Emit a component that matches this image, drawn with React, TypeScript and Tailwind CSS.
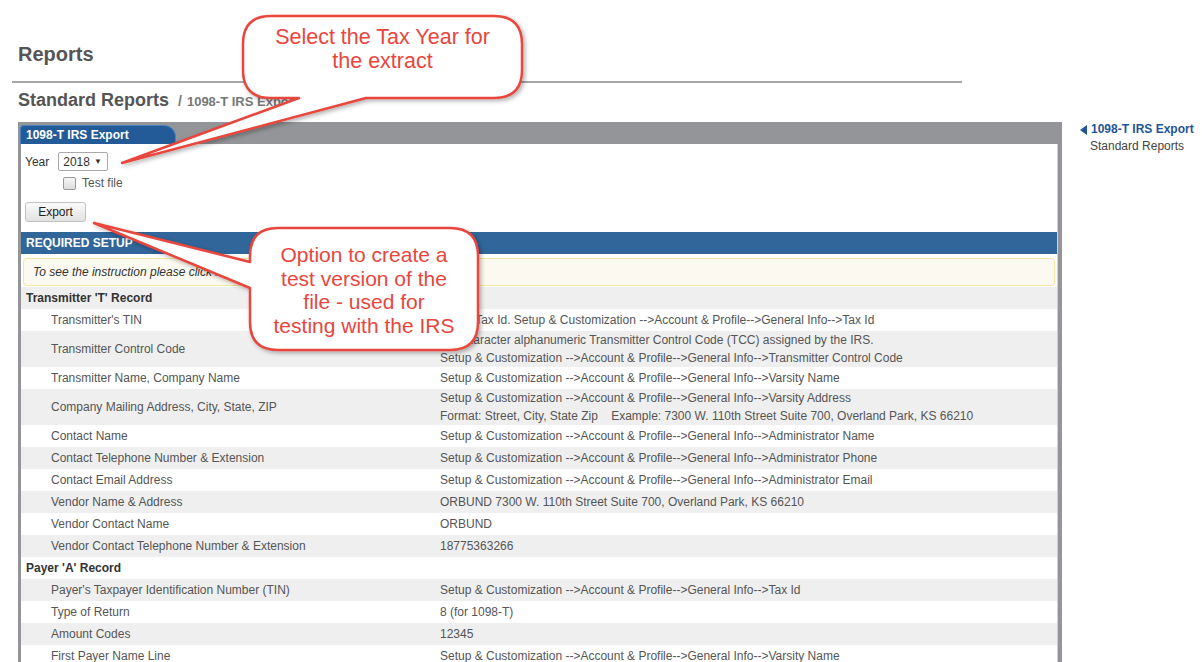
import React from 'react';

type Row =
  | { kind: 'section'; title: string }
  | { kind: 'item'; label: string; value: string[] };

const rows: Row[] = [
  { kind: 'section', title: "Transmitter 'T' Record" },
  { kind: 'item', label: "Transmitter's TIN", value: ['9 digit Tax Id. Setup & Customization -->Account & Profile-->General Info-->Tax Id'] },
  {
    kind: 'item',
    label: 'Transmitter Control Code',
    value: [
      'A 5 character alphanumeric Transmitter Control Code (TCC) assigned by the IRS.',
      'Setup & Customization -->Account & Profile-->General Info-->Transmitter Control Code',
    ],
  },
  { kind: 'item', label: 'Transmitter Name, Company Name', value: ['Setup & Customization -->Account & Profile-->General Info-->Varsity Name'] },
  {
    kind: 'item',
    label: 'Company Mailing Address, City, State, ZIP',
    value: [
      'Setup & Customization -->Account & Profile-->General Info-->Varsity Address',
      'Format: Street, City, State Zip\u00a0\u00a0\u00a0\u00a0Example: 7300 W. 110th Street Suite 700, Overland Park, KS 66210',
    ],
  },
  { kind: 'item', label: 'Contact Name', value: ['Setup & Customization -->Account & Profile-->General Info-->Administrator Name'] },
  { kind: 'item', label: 'Contact Telephone Number & Extension', value: ['Setup & Customization -->Account & Profile-->General Info-->Administrator Phone'] },
  { kind: 'item', label: 'Contact Email Address', value: ['Setup & Customization -->Account & Profile-->General Info-->Administrator Email'] },
  { kind: 'item', label: 'Vendor Name & Address', value: ['ORBUND 7300 W. 110th Street Suite 700, Overland Park, KS 66210'] },
  { kind: 'item', label: 'Vendor Contact Name', value: ['ORBUND'] },
  { kind: 'item', label: 'Vendor Contact Telephone Number & Extension', value: ['18775363266'] },
  { kind: 'section', title: "Payer 'A' Record" },
  { kind: 'item', label: "Payer's Taxpayer Identification Number (TIN)", value: ['Setup & Customization -->Account & Profile-->General Info-->Tax Id'] },
  { kind: 'item', label: 'Type of Return', value: ['8 (for 1098-T)'] },
  { kind: 'item', label: 'Amount Codes', value: ['12345'] },
  { kind: 'item', label: 'First Payer Name Line', value: ['Setup & Customization -->Account & Profile-->General Info-->Varsity Name'] },
];

const Callouts: React.FC = () => (
  <div className="absolute inset-0 pointer-events-none">
    <svg width="1202" height="662" className="absolute left-0 top-0">
      <defs>
        <filter id="shadow" x="-20%" y="-20%" width="140%" height="140%">
          <feDropShadow dx="2" dy="2" stdDeviation="2" floodColor="#000" floodOpacity="0.3" />
        </filter>
      </defs>
      <path
        d="M 271 16 H 494 Q 522 16 522 44 V 70 Q 522 98 494 98 H 366 L 122 163 L 299 98 H 271 Q 243 98 243 70 V 44 Q 243 16 271 16 Z"
        fill="#fff"
        stroke="#e8463d"
        strokeWidth="2.5"
        strokeLinejoin="round"
        filter="url(#shadow)"
      />
      <path
        d="M 278 228 H 450 Q 478 228 478 256 V 322 Q 478 350 450 350 H 278 Q 250 350 250 322 V 288 L 94 223 L 250 262 V 256 Q 250 228 278 228 Z"
        fill="#fff"
        stroke="#e8463d"
        strokeWidth="2.5"
        strokeLinejoin="round"
        filter="url(#shadow)"
      />
    </svg>
    <div className="absolute left-[243px] top-[25px] w-[279px] text-center text-[21.5px] leading-[24px] text-[#e8463d] font-['Liberation_Sans',Arial,sans-serif]">
      Select the Tax Year for
      <br />
      the extract
    </div>
    <div className="absolute left-[250px] top-[243px] w-[228px] text-center text-[21px] leading-[23.5px] text-[#e8463d] font-['Liberation_Sans',Arial,sans-serif]">
      Option to create a
      <br />
      test version of the
      <br />
      file - used for
      <br />
      testing with the IRS
    </div>
  </div>
);

const App: React.FC = () => {
  return (
    <div className="relative w-[1202px] h-[662px] overflow-hidden bg-white font-['Liberation_Sans',Arial,sans-serif] text-[12px] text-[#444]">
      <div className="flex">
        <div className="w-[1062px] shrink-0">
          <header className="ml-[12px] w-[950px] pt-[42px]">
            <h1 className="pl-[6px] text-[20px] leading-[24px] font-bold text-[#555]">Reports</h1>
            <div className="mt-[15px] h-[2px] bg-[#a6a6a6]" />
            <div className="mt-[6px] mb-[9px] pl-[6px] flex items-baseline leading-[22px]">
              <span className="text-[18px] font-bold text-[#555]">Standard Reports</span>
              <span className="ml-[9px] text-[14px] font-bold text-[#777]">/</span>
              <span className="ml-[5px] text-[13px] font-bold text-[#777]">1098-T IRS Export</span>
            </div>
          </header>

          <div className="ml-[18px] w-[1044px] h-[545px] bg-[#939598] pl-[3px] pr-[4px] pt-[3px]">
            <div className="h-[19px] flex">
              <div className="ml-[-1px] w-[156px] h-[19px] bg-[#235b99] border-t border-l border-r border-[#4a80bf] rounded-tl-[4px] rounded-tr-[12px] pl-[5px] text-[12px] leading-[18px] font-bold text-white">
                1098-T IRS Export
              </div>
            </div>
            <div className="bg-white h-full border-r border-[#d0d0d0]">
              <div className="px-[4px] pt-[8px] pb-[10px]">
                <div className="flex items-center h-[19px]">
                  <span className="text-[12px] text-[#333]">Year</span>
                  <div className="ml-[9px] w-[50px] h-[19px] border border-[#a9a9a9] rounded-[2px] flex items-center pl-[4px] text-[12px] text-[#333]">
                    2018
                    <span className="ml-[4px] text-[8px] leading-none">▼</span>
                  </div>
                </div>
                <div className="mt-[5px] flex items-center h-[14px] pl-[38px]">
                  <span className="w-[13px] h-[13px] rounded-[2px] border border-[#9a9a9a] bg-gradient-to-b from-[#f6f6f6] to-[#dedede]" />
                  <span className="ml-[6px] text-[12px] text-[#555]">Test file</span>
                </div>
                <button className="mt-[12px] w-[61px] h-[20px] border border-[#c2c2c2] rounded-[3px] bg-gradient-to-b from-[#fafafa] to-[#e2e2e2] text-[12px] text-[#222] leading-[18px]">
                  Export
                </button>
              </div>

              <div className="h-[22px] bg-[#30669a] pl-[5px] text-[12px] leading-[22px] font-bold text-white">REQUIRED SETUP</div>
              <div className="mx-[2px] mt-[4px] mb-[1px] h-[28px] border border-[#f5e79e] rounded-[4px] bg-[#fcfaf0] pl-[9px] text-[12px] leading-[26px] italic text-[#333]">
                To see the instruction please click here
              </div>

              <div>
                {rows.map((row, i) => {
                  const stripe = i % 2 === 0 ? 'bg-[#efefef]' : 'bg-white';
                  if (row.kind === 'section') {
                    return (
                      <div key={i} className={`${stripe} h-[22px] pl-[5px] leading-[22px] font-bold text-[#333]`}>
                        {row.title}
                      </div>
                    );
                  }
                  const multi = row.value.length > 1;
                  return (
                    <div key={i} className={`${stripe} grid grid-cols-[419px_1fr] items-center ${multi ? 'h-[36px]' : 'h-[22px]'}`}>
                      <div className="pl-[30px] leading-[18px] text-[#555]">{row.label}</div>
                      <div className="leading-[18px] text-[#555]">
                        {row.value.map((v, j) => (
                          <div key={j}>{v}</div>
                        ))}
                      </div>
                    </div>
                  );
                })}
              </div>
            </div>
          </div>
        </div>

        <aside className="ml-[18px] pt-[121px] text-[12px] leading-[17px]">
          <div className="flex items-center">
            <svg width="7" height="10" viewBox="0 0 7 10" className="mr-[4px]">
              <polygon points="7,0 7,10 0,5" fill="#1f5496" />
            </svg>
            <span className="font-bold text-[#1f5496]">1098-T IRS Export</span>
          </div>
          <div className="pl-[10px] text-[#444]">Standard Reports</div>
        </aside>
      </div>

      <Callouts />
    </div>
  );
};

export default App;
